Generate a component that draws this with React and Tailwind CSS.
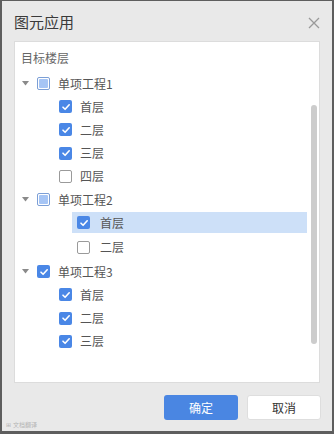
import React from "react";

const font = { fontFamily: '"Noto Sans CJK SC", "Noto Sans", sans-serif' };

function Check({ state }) {
  if (state === "on") {
    return (
      <span className="w-[13px] h-[13px] rounded-[2px] bg-[#4a87e6] flex items-center justify-center shrink-0">
        <svg width="10" height="10" viewBox="0 0 10 10">
          <path d="M2 5.2 L4.1 7.3 L8.2 2.8" fill="none" stroke="#fff" strokeWidth="1.6" strokeLinecap="round" strokeLinejoin="round" />
        </svg>
      </span>
    );
  }
  if (state === "half") {
    return (
      <span className="w-[13px] h-[13px] rounded-[2px] border border-[#7c9fd6] bg-white p-[1px] flex shrink-0">
        <span className="flex-1 rounded-[1px] bg-[#a6c5f5]" />
      </span>
    );
  }
  return <span className="w-[13px] h-[13px] rounded-[2px] border border-[#9a9a9a] bg-white shrink-0" />;
}

function Caret() {
  return (
    <svg width="7" height="5" viewBox="0 0 7 5" className="shrink-0">
      <path d="M0 0 L7 0 L3.5 4.5 Z" fill="#8a8a8a" />
    </svg>
  );
}

function Group({ label, state }) {
  return (
    <div className="flex items-center h-[23.2px] pl-[7px]">
      <Caret />
      <span className="ml-[8px]"><Check state={state} /></span>
      <span className="ml-[8px] text-[12px] text-[#555]">{label}</span>
    </div>
  );
}

function Leaf({ label, state }) {
  return (
    <div className="flex items-center h-[23.2px] pl-[44px]">
      <Check state={state} />
      <span className="ml-[8px] text-[12px] text-[#555]">{label}</span>
    </div>
  );
}

function DeepLeaf({ label, state, selected }) {
  return (
    <div className="flex items-center h-[24.5px] pl-[57px]">
      <div className={`flex items-center h-[21px] w-[235px] pl-[5px] -mt-[1px] ${selected ? "bg-[#cde0f8]" : ""}`}>
        <Check state={state} />
        <span className="ml-[10px] text-[12px] text-[#555]">{label}</span>
      </div>
    </div>
  );
}

export default function App() {
  return (
    <div style={font} className="relative w-[334px] h-[434px] bg-[#e9e9e9] border-l-2 border-r-2 border-t border-b-[3px] border-[#5e5e5e] flex flex-col">
      <div className="h-[40px] flex items-center justify-between pl-[12px] pr-[12px]">
        <span className="text-[15px] text-[#3a3a3a] mt-[3px]">图元应用</span>
        <svg width="12" height="12" viewBox="0 0 12 12" className="mt-[3px]">
          <path d="M1 1 L11 11 M11 1 L1 11" stroke="#9a9a9a" strokeWidth="1.3" />
        </svg>
      </div>
      <div className="relative mx-[12px] h-[342px] bg-white border border-[#dcdcdc]">
        <div className="pt-[8px] pl-[6px] text-[12px] leading-[16px] text-[#666]">目标楼层</div>
        <div className="mt-[6px]">
          <Group label="单项工程1" state="half" />
          <Leaf label="首层" state="on" />
          <Leaf label="二层" state="on" />
          <Leaf label="三层" state="on" />
          <Leaf label="四层" state="off" />
          <Group label="单项工程2" state="half" />
          <DeepLeaf label="首层" state="on" selected />
          <DeepLeaf label="二层" state="off" />
          <Group label="单项工程3" state="on" />
          <Leaf label="首层" state="on" />
          <Leaf label="二层" state="on" />
          <Leaf label="三层" state="on" />
        </div>
        <div className="absolute right-[2px] top-[63px] w-[6px] h-[239px] rounded-full bg-[#cccccc]" />
      </div>
      <div className="flex justify-end gap-[9px] pr-[11px] mt-[12px]">
        <button className="w-[74px] h-[25px] rounded-[3px] bg-[#4a86e2] text-white text-[12px]">确定</button>
        <button className="w-[74px] h-[25px] rounded-[3px] bg-white border border-[#dedede] text-[#333] text-[12px]">取消</button>
      </div>
      <div className="absolute left-[4px] bottom-[3px] flex items-center gap-[2px] text-[6px] leading-[7px] text-[#b5b5b5]">
        <span>⊞</span><span>文档翻译</span>
      </div>
    </div>
  );
}
